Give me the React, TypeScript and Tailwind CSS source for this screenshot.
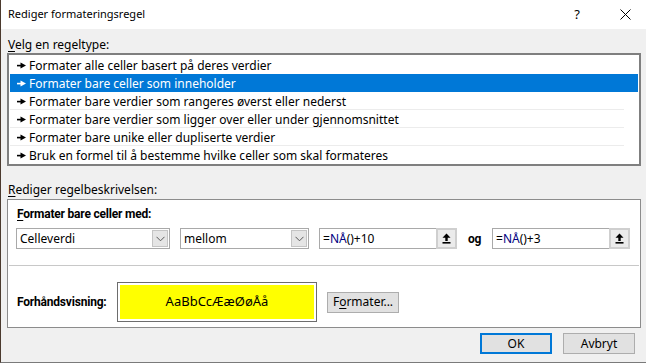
import React from "react";

const Arrow = ({ white }: { white?: boolean }) => (
  <svg width="9" height="7" viewBox="0 0 9 7" className="shrink-0 mt-[1px]">
    <rect x="0" y="2.8" width="4" height="1.6" fill={white ? "#fff" : "#000"} />
    <polygon points="3.5,0.5 9,3.5 3.5,6.5" fill={white ? "#fff" : "#000"} />
  </svg>
);

const Chevron = () => (
  <svg width="9" height="6" viewBox="0 0 9 6">
    <polyline points="0.5,0.8 4.5,4.8 8.5,0.8" fill="none" stroke="#5a5a5a" strokeWidth="1" />
  </svg>
);

const UpArrow = () => (
  <svg width="9" height="11" viewBox="0 0 9 11">
    <polygon points="4.5,0.5 8.5,4.8 0.5,4.8" fill="#000" />
    <rect x="3.3" y="4" width="2.4" height="4" fill="#000" />
    <rect x="0.5" y="9" width="8" height="1.6" fill="#000" />
  </svg>
);

const rows = [
  "Formater alle celler basert på deres verdier",
  "Formater bare celler som inneholder",
  "Formater bare verdier som rangeres øverst eller nederst",
  "Formater bare verdier som ligger over eller under gjennomsnittet",
  "Formater bare unike eller dupliserte verdier",
  "Bruk en formel til å bestemme hvilke celler som skal formateres",
];

const Combo = ({ w, text }: { w: string; text: string }) => (
  <div className={`${w} h-[21px] bg-white border border-[#a9a9a9] flex items-center justify-between pl-[3px] pr-[1px]`}>
    <span className="text-[12px] text-black leading-none">{text}</span>
    <div className="w-[16px] h-[17px] bg-[#e5e5e5] border border-[#c4c4c4] flex items-center justify-center">
      <Chevron />
    </div>
  </div>
);

const Formula = ({ n }: { n: string }) => (
  <div className="w-[138px] h-[21px] flex">
    <div className="flex-1 bg-white border border-[#a9a9a9] border-r-0 flex items-center pl-[3px]">
      <span className="text-[12px] leading-none text-black">
        =<span className="text-[#00007f]">NÅ</span>()+{n}
      </span>
    </div>
    <div className="w-[21px] h-[21px] bg-[#cfcfcf] p-[2px]">
      <div className="w-full h-full bg-[#ebebeb] flex items-center justify-center">
        <UpArrow />
      </div>
    </div>
  </div>
);

const bold = "font-['Roboto',sans-serif] font-bold tracking-[-0.2px]";

export default function App() {
  return (
    <div className="w-[646px] h-[363px] bg-[#f0f0f0] flex flex-col border-l border-l-[#4b3a2e] border-b border-b-[#7a7a7a] font-['Noto_Sans',sans-serif] text-black overflow-hidden">
      <div className="h-[29px] bg-white flex items-center shrink-0">
        <span className="ml-[7px] text-[11px]">Rediger formateringsregel</span>
        <span className="ml-auto mr-[40px] text-[13px]">?</span>
        <svg width="11" height="11" viewBox="0 0 11 11" className="mr-[15px]">
          <path d="M0.5 0.5 L10.5 10.5 M10.5 0.5 L0.5 10.5" stroke="#000" strokeWidth="1" />
        </svg>
      </div>

      <div className="ml-[7px] mt-[9px] h-[14px] leading-[14px] text-[12px]">
        <span className="underline underline-offset-2">V</span>elg en regeltype:
      </div>

      <div className="ml-[6px] mt-[1px] w-[634px] h-[113px] border-2 border-[#7f7f7f] bg-white pt-[1px] px-[1px] flex flex-col shrink-0 overflow-hidden">
        {rows.map((r, i) => {
          const sel = i === 1;
          return (
            <div
              key={i}
              className={`h-[18px] shrink-0 flex items-center pl-[7px] gap-[2px] relative ${sel ? "bg-[#0078d7] text-white" : "text-black"}`}
            >
              <Arrow white={sel} />
              <span className="text-[12px] leading-none ml-[1px] mt-[2px]">{r}</span>
              {i >= 2 && i <= 4 ? (
                <div className="absolute left-0 right-[14px] bottom-0 h-px bg-[#ececec]" />
              ) : null}
            </div>
          );
        })}
      </div>

      <div className="ml-[7px] mt-[17px] h-[14px] leading-[14px] text-[12px]">
        <span className="underline underline-offset-2">R</span>ediger regelbeskrivelsen:
      </div>

      <div className="ml-[6px] mt-[2px] w-[634px] h-[129px] border border-[#8c8c8c] bg-white flex flex-col shrink-0">
        <div className={`ml-[9px] mt-[7px] h-[14px] leading-[14px] text-[12px] ${bold}`}>
          <span className="underline underline-offset-2">F</span>ormater bare celler med:
        </div>
        <div className="ml-[8px] mt-[7px] flex items-center">
          <Combo w="w-[154px]" text="Celleverdi" />
          <div className="w-[10px]" />
          <Combo w="w-[129px]" text="mellom" />
          <div className="w-[10px]" />
          <Formula n="10" />
          <span className={`w-[35px] text-center text-[12px] ${bold}`}>og</span>
          <Formula n="3" />
        </div>
        <div className="mx-[1px] mt-[16px] h-px bg-[#c8c8c8]" />
        <div className="mt-[16px] flex items-center">
          <span className={`ml-[9px] w-[100px] text-[12px] ${bold}`}>Forhåndsvisning:</span>
          <div className="w-[200px] h-[40px] border border-[#6d6d6d] p-[2px] bg-white">
            <div className="w-full h-full bg-[#ffff00] flex items-center justify-center text-[13px]">
              AaBbCcÆæØøÅå
            </div>
          </div>
          <button className="ml-[10px] w-[72px] h-[21px] bg-[#e1e1e1] border border-[#adadad] text-[12px] flex items-center justify-center">
            F<span className="underline underline-offset-2">o</span>rmater...
          </button>
        </div>
      </div>

      <div className="mt-[5px] flex justify-end pr-[11px] gap-[11px]">
        <button className="w-[72px] h-[21px] bg-[#e1e1e1] border-2 border-[#0078d7] text-[12px] flex items-center justify-center">
          OK
        </button>
        <button className="w-[72px] h-[21px] bg-[#e1e1e1] border border-[#adadad] text-[12px] flex items-center justify-center">
          Avbryt
        </button>
      </div>
    </div>
  );
}
